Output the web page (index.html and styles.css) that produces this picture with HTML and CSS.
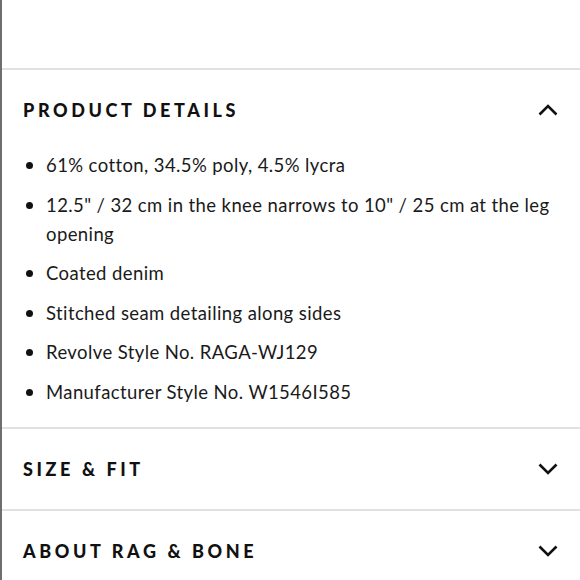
FILE: index.html
```html
<!DOCTYPE html>
<html>
<head>
<meta charset="utf-8">
<link rel="stylesheet" href="styles.css">
</head>
<body>
<div class="page">
  <div class="top"></div>
  <section class="acc open">
    <div class="acc-head">
      <h2 class="acc-title">PRODUCT DETAILS</h2>
      <svg class="chev" width="20" height="12" viewBox="0 0 20 12"><path d="M1.5 10.5 L10 2 L18.5 10.5" fill="none" stroke="#111" stroke-width="2.6"/></svg>
    </div>
    <ul class="details">
      <li>61% cotton, 34.5% poly, 4.5% lycra</li>
      <li>12.5" / 32 cm in the knee narrows to 10" / 25 cm at the leg opening</li>
      <li>Coated denim</li>
      <li>Stitched seam detailing along sides</li>
      <li>Revolve Style No. RAGA-WJ129</li>
      <li>Manufacturer Style No. W1546I585</li>
    </ul>
  </section>
  <section class="acc">
    <div class="acc-head">
      <h2 class="acc-title">SIZE &amp; FIT</h2>
      <svg class="chev" width="20" height="12" viewBox="0 0 20 12"><path d="M1.5 1.5 L10 10 L18.5 1.5" fill="none" stroke="#111" stroke-width="2.6"/></svg>
    </div>
  </section>
  <section class="acc">
    <div class="acc-head">
      <h2 class="acc-title">ABOUT RAG &amp; BONE</h2>
      <svg class="chev" width="20" height="12" viewBox="0 0 20 12"><path d="M1.5 1.5 L10 10 L18.5 1.5" fill="none" stroke="#111" stroke-width="2.6"/></svg>
    </div>
  </section>
</div>
</body>
</html>
```
FILE: styles.css
```css
html, body {
  margin: 0;
  padding: 0;
  background: #fff;
}
.page {
  width: 578px;
  height: 580px;
  overflow: hidden;
  border-left: 2px solid #6e6e6e;
  color: #111;
}
.top {
  height: 68px;
}
.acc {
  border-top: 2px solid #e1e1e1;
}
.acc-head {
  height: 80px;
  display: flex;
  align-items: center;
  justify-content: space-between;
  padding: 0 22px 0 21px;
}
.acc-title {
  margin: 0;
  font-family: Lato, "Liberation Sans", sans-serif;
  font-weight: 900;
  font-size: 18px;
  letter-spacing: 3.6px;
  color: #111;
}
.chev {
  display: block;
}
.details {
  list-style: none;
  margin: 0;
  padding: 1px 20px 20px 44px;
  font-family: Lato, "Liberation Sans", sans-serif;
  font-size: 18.5px;
  letter-spacing: 0.4px;
  line-height: 29px;
  color: #1a1a1a;
  display: flex;
  flex-direction: column;
  gap: 10.5px;
}
.details li {
  position: relative;
}
.details li::before {
  content: "";
  position: absolute;
  left: -20px;
  top: 11px;
  width: 7px;
  height: 7px;
  border-radius: 50%;
  background: #111;
}
```
